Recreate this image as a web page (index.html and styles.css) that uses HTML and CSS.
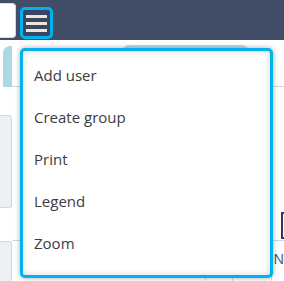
FILE: index.html
```html
<!DOCTYPE html>
<html lang="en">
  <head>
    <meta charset="UTF-8" />
    <meta name="viewport" content="width=device-width, initial-scale=1.0" />
    <title>Menu</title>
    <link rel="stylesheet" href="styles.css">
  </head>
  <body>
    <div class="topbar">
      <div class="search"></div>
      <button class="menu-button" aria-label="Menu">
        <span></span><span></span><span></span>
      </button>
    </div>

    <div class="workspace">
      <div class="side">
        <div class="side-tab"></div>
        <div class="side-panel"></div>
        <div class="side-panel last"></div>
      </div>
      <div class="main">
        <div class="tabs">
          <div class="tab"></div>
        </div>
        <div class="filters">
          <div class="filter-box"></div>
        </div>
        <div class="table-head">
          <div class="col wide"></div>
          <div class="col"></div>
          <div class="col mid"></div>
          <div class="col label">N</div>
        </div>
      </div>
    </div>

    <ul class="dropdown">
      <li>Add user</li>
      <li>Create group</li>
      <li>Print</li>
      <li>Legend</li>
      <li>Zoom</li>
    </ul>
  </body>
</html>
```

FILE: styles.css
```css
:root {
  --bar-color: #424e68;
  --accent-color: #00b2ee;
  --tab-color: #acd8e6;
  --line-color: #c6dbe6;
  --text-color: #3c3c3c;
}

body {
  margin: 0;
  width: 284px;
  height: 281px;
  overflow: hidden;
  background-color: #ffffff;
  font-family: "Open Sans", "Noto Sans", sans-serif;
  position: relative;
}

.topbar {
  height: 40px;
  background-color: var(--bar-color);
  display: flex;
  align-items: flex-start;
  gap: 4px;
}

.search {
  width: 15px;
  height: 33px;
  margin-top: 3px;
  background-color: #ffffff;
  border: 1px solid #d6d9de;
  border-left: none;
  border-radius: 0 4px 4px 0;
}

.menu-button {
  margin-top: 7px;
  width: 33px;
  height: 32px;
  padding: 0;
  border: 3px solid var(--accent-color);
  border-radius: 5px;
  background-color: #3a4560;
  display: flex;
  flex-direction: column;
  justify-content: center;
  align-items: center;
  gap: 4px;
  cursor: pointer;
}

.menu-button span {
  display: block;
  width: 21px;
  height: 3px;
  background-color: #ece4dc;
}

.workspace {
  display: flex;
  height: 241px;
}

.side {
  width: 15px;
  display: flex;
  flex-direction: column;
}

.side-tab {
  flex-shrink: 0;
  height: 41px;
  margin: 6px 0 0 3px;
  background-color: var(--tab-color);
  border-radius: 7px 0 0 0;
}

.side-panel {
  flex-shrink: 0;
  height: 91px;
  margin-top: 28px;
  background-color: #edf0f2;
  border: 1px solid var(--line-color);
  border-left: none;
  border-radius: 0 3px 3px 0;
}

.side-panel.last {
  flex: 1;
  height: auto;
  margin-top: 33px;
  border-bottom: none;
  border-radius: 0 3px 0 0;
}

.main {
  flex: 1;
  display: flex;
  flex-direction: column;
}

.tabs {
  height: 46px;
  border-bottom: 1px solid var(--line-color);
  display: flex;
  align-items: flex-end;
}

.tab {
  width: 127px;
  height: 41px;
  margin-left: 110px;
  background-color: #b9dde9;
  border-radius: 7px 7px 0 0;
}

.filters {
  height: 153px;
  display: flex;
  justify-content: flex-end;
  align-items: flex-end;
  border-bottom: 1px solid var(--line-color);
}

.filter-box {
  width: 1px;
  height: 23px;
  margin-bottom: 1px;
  border: 2px solid #2e3b57;
  border-right: none;
}

.table-head {
  flex: 1;
  display: flex;
}

.col {
  width: 26px;
  border-right: 1px solid var(--line-color);
}

.col.wide {
  width: 193px;
}

.col.mid {
  width: 38px;
}

.col.label {
  width: auto;
  border-right: none;
  padding: 8px 0 0 1px;
  font-size: 14px;
  color: #3b4a6b;
}

.dropdown {
  position: absolute;
  left: 20px;
  top: 48px;
  width: 247px;
  height: 217px;
  margin: 0;
  padding: 3px 0 4px;
  list-style: none;
  background-color: #ffffff;
  border: 3px solid var(--accent-color);
  border-radius: 5px;
  box-shadow: 0 0 5px rgba(0, 0, 0, 0.35), inset 0 0 6px rgba(0, 0, 0, 0.18);
}

.dropdown li {
  height: 42px;
  line-height: 42px;
  padding-left: 11px;
  font-size: 15px;
  color: var(--text-color);
  cursor: pointer;
}
```
